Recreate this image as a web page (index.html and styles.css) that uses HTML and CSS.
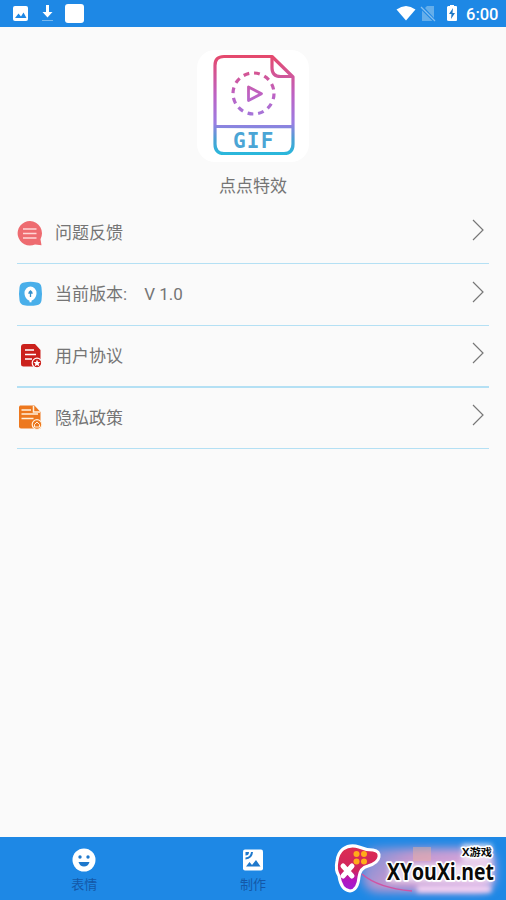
FILE: index.html
```html
<!DOCTYPE html>
<html lang="zh-CN">
<head>
<meta charset="utf-8">
<title>点点特效</title>
<link rel="stylesheet" href="styles.css">
</head>
<body>
<div class="screen">
  <header class="status">
    <svg class="status-left" width="100" height="27" viewBox="0 0 100 27">
      <rect x="13" y="6" width="15" height="15" rx="2" fill="#fff"/>
      <path d="M15 18l3.500-4.500 2.500 3 2.500-4 3 5.500z" fill="#1e88e5"/>
      <path d="M46 5h3v7h3.500L47.500 17.500 42.500 12H46z" fill="#fff"/>
      <path d="M42 20.500h11" stroke="#78b8ef"/>
      <rect x="65" y="4" width="19" height="19" rx="3" fill="#fff"/>
    </svg>
    <div class="status-right">
      <svg width="70" height="27" viewBox="0 0 70 27">
        <path d="M6.500 9.500Q16 2.500 25.500 9.500L16 20.500z" fill="#fff"/>
        <path d="M35 8l2-2h7v12zM32 10.500L42.500 21H32z" fill="#65aeea"/>
        <path d="M31 7l14 14" stroke="#86bfef" stroke-width="1.200"/>
        <path d="M58 6h2V5h4v1h2q1 0 1 1v13q0 1-1 1h-7q-2 0-2-1V7z" fill="#fff"/>
        <path d="M63 8l-4 6h2.500L61 19l4-6h-2.500z" fill="#1e78c5"/>
      </svg>
      <span class="clock">6:00</span>
    </div>
  </header>

  <main class="content">
    <div class="logo">
      <svg width="112" height="112" viewBox="0 0 112 112">
        <defs>
          <linearGradient id="ink" gradientUnits="userSpaceOnUse" x1="0" y1="5" x2="0" y2="105">
            <stop offset="0" stop-color="#e6496b"/>
            <stop offset=".4" stop-color="#bd62c4"/>
            <stop offset=".68" stop-color="#9b7de2"/>
            <stop offset=".84" stop-color="#4c9fd4"/>
            <stop offset="1" stop-color="#28b9dc"/>
          </linearGradient>
        </defs>
        <g fill="none" stroke="url(#ink)" stroke-width="3.200" stroke-linejoin="round">
          <path d="M27 6.500H75L96 27V94q0 9.500-9 9.500H27q-9 0-9-9.500V15.500q0-9 9-9z"/>
          <path d="M75 6.500V18q0 8.500 8.500 8.500h12"/>
          <path d="M18 76.500l77.500.200"/>
          <circle cx="56.500" cy="43.500" r="20.500" stroke-dasharray="5.800 4.930"/>
          <path d="M51.500 37v13.500l13-6.800z" stroke-width="2.800"/>
        </g>
        <text class="gif" x="36" y="98">GIF</text>
      </svg>
    </div>
    <h1 class="name">点点特效</h1>

    <ul class="list">
      <li class="row">
        <svg class="icon" width="28" height="28" viewBox="0 0 28 28">
          <path d="M14 2a12.300 12.300 0 1 0 5 23.500l6.500.700-1-6A12.300 12.300 0 0 0 14 2z" fill="#ee6b70"/>
          <path d="M7 10h13.500M7 14.500h13.500M7 19h13.500" stroke="#ffd6d6" stroke-width="1.400"/>
        </svg>
        <span class="label">问题反馈</span>
        <svg class="arrow" width="14" height="22" viewBox="0 0 14 22"><path d="M2 1l10 10L2 21"/></svg>
      </li>
      <li class="row">
        <svg class="icon" width="28" height="28" viewBox="0 0 28 28">
          <path d="M8 2.500q6.500-1.500 13 0 4 .500 4.500 5 1 6.500 0 13-.500 4-5 4.800-6 1-12.500 0-4-.800-4.500-5-1-6.500 0-13Q4 3 8 2.500z" fill="#49afea"/>
          <path d="M14.500 6.500a6 6.500 0 0 0-6 6.500c0 4 2.500 6.800 5 7.700v1.500h2v-1.500c2.500-.900 5-3.700 5-7.700a6 6.500 0 0 0-6-6.500z" fill="#fff"/>
          <path d="M14.500 17v-6M12.300 13.200h4.400M13 12.500l1.500-1.500 1.500 1.500" stroke="#348fc9" stroke-width="1.300" fill="none"/>
        </svg>
        <span class="label">当前版本:</span><span class="version">V 1.0</span>
        <svg class="arrow" width="14" height="22" viewBox="0 0 14 22"><path d="M2 1l10 10L2 21"/></svg>
      </li>
      <li class="row row-thick">
        <svg class="icon" width="28" height="28" viewBox="0 0 28 28">
          <path d="M8 2h11l5.500 6v15.500q0 1-1 1H7.500Q5 24.500 5 22V5q0-3 3-3z" fill="#cb211c"/>
          <path d="M9 8h9M9 12.500h11M9 17h7" stroke="#fff" stroke-width="1.600"/>
          <circle cx="21" cy="21" r="4.800" fill="#cb211c" stroke="#fff" stroke-width="1.200"/>
          <path d="M21 17.500l1 2.400 2.500.200-1.900 1.700.600 2.500-2.200-1.400-2.200 1.400.600-2.500-1.900-1.700 2.500-.200z" fill="#fff"/>
        </svg>
        <span class="label">用户协议</span>
        <svg class="arrow" width="14" height="22" viewBox="0 0 14 22"><path d="M2 1l10 10L2 21"/></svg>
      </li>
      <li class="row">
        <svg class="icon" width="28" height="28" viewBox="0 0 28 28">
          <path d="M4 1.500h14.500l6 6.500v16.500H5q-2 0-2-2v-20z" fill="#ed781e"/>
          <path d="M17.500 2v6H24M5.500 6H15M5.500 10H22M5.500 14.500h12" stroke="#fff0dc" stroke-width="1.500" fill="none"/>
          <circle cx="21" cy="20.500" r="4.800" fill="#ed781e" stroke="#fff0dc" stroke-width="1.200"/>
          <path d="M18.500 20.500l2.500-2.500 2.500 2.500v2.500h-5z" stroke="#fff0dc" fill="none"/>
        </svg>
        <span class="label">隐私政策</span>
        <svg class="arrow" width="14" height="22" viewBox="0 0 14 22"><path d="M2 1l10 10L2 21"/></svg>
      </li>
    </ul>
  </main>

  <nav class="tabs">
    <div class="tab">
      <svg width="24" height="24" viewBox="0 0 24 24">
        <circle cx="12" cy="12" r="11.500" fill="#fff"/>
        <circle cx="8" cy="9" r="1.700" fill="#1e78cc"/><circle cx="16" cy="9" r="1.700" fill="#1e78cc"/>
        <path d="M6.500 14h11q-1.500 4.500-5.500 4.500T6.500 14z" fill="#1e78cc"/>
      </svg>
      <span>表情</span>
    </div>
    <div class="tab">
      <svg width="24" height="24" viewBox="0 0 24 24">
        <rect x="2" y="1.500" width="20" height="21" rx="2" fill="#fff"/>
        <path d="M4.500 4H8q0 3.500-3.500 3.500zM10 4h2q-.500 7-7.500 7.500v-2Q9.500 9 10 4zM5 18.500l3.500-4.500 2.500 3 4-5 4.500 6.500z" fill="#1e78cc"/>
      </svg>
      <span>制作</span>
    </div>
    <div class="tab"></div>
    <div class="badge">
      <svg width="186" height="63" viewBox="0 0 186 63">
        <defs>
          <linearGradient id="haze" x1="0" x2="1" y1="0" y2=".3">
            <stop offset="0" stop-color="#698fdb"/><stop offset=".4" stop-color="#c398cf"/><stop offset="1" stop-color="#d8a9df"/>
          </linearGradient>
          <linearGradient id="pad" x1="0" x2="0" y1="0" y2="1">
            <stop offset="0" stop-color="#dd2e50"/><stop offset=".55" stop-color="#cf245f"/><stop offset=".75" stop-color="#b315bd"/><stop offset="1" stop-color="#9d20d7"/>
          </linearGradient>
          <filter id="soft" x="-20%" y="-40%" width="140%" height="180%"><feGaussianBlur stdDeviation="5"/></filter>
          <filter id="glow" filterUnits="userSpaceOnUse" x="60" y="0" width="126" height="63"><feGaussianBlur stdDeviation="2.500"/></filter>
        </defs>
        <rect x="42" y="11" width="133" height="44" rx="15" fill="url(#haze)" filter="url(#soft)"/>
        <path d="M93 10h18v14H93z" fill="#efb49b" opacity=".45"/>
        <path d="M97 52h74" stroke="#f7d3f2" stroke-width="7" filter="url(#glow)"/>
        <path d="M69 36h103M142 16h30" stroke="#fff" stroke-width="18" opacity=".65" filter="url(#glow)"/>
        <path d="M42 37Q58 51 92 54" fill="none" stroke="#cf54a4" stroke-width="1.600"/>
        <path d="M23 12Q30 7 39 10q7 3 14 3 7 1 6 7-1 6-11 9-8 2-9 11-1 13-9 14-9-1-11-15-4-6-2-15 1-8 6-12z" fill="url(#pad)" stroke="#fff" stroke-width="3"/>
        <g fill="#ffac19"><circle cx="36.500" cy="17" r="3"/><circle cx="44" cy="17" r="3"/><circle cx="36.500" cy="24.500" r="3"/><circle cx="44" cy="24.500" r="3"/></g>
        <path d="M23 29l9 10m0-10l-9 10" stroke="#fff" stroke-width="5" stroke-linecap="round"/>
        <text class="badge-small" x="142" y="19" textLength="30" lengthAdjust="spacingAndGlyphs">X游戏</text>
        <text class="badge-main" x="67" y="43" textLength="107" lengthAdjust="spacingAndGlyphs">XYouXi.net</text>
      </svg>
    </div>
  </nav>
</div>
</body>
</html>
```
FILE: styles.css
```css
* { box-sizing: border-box; }
body {
  margin: 0;
  background: #fafafa;
  color: #757575;
  font-family: Roboto, "Noto Sans CJK SC", sans-serif;
}
svg { display: block; flex: none; overflow: visible; }
.screen { width: 506px; height: 900px; display: flex; flex-direction: column; }
.status {
  height: 27px;
  flex: none;
  display: flex;
  justify-content: space-between;
  background: #1e88e5;
}
.status-right { display: flex; width: 116px; align-items: center; }
.clock { padding-left: 6px; padding-top: 1px; color: #fff; font-size: 16.5px; font-weight: 500; white-space: nowrap; }
.content { flex: 1; padding: 23px 17px 0; }
.logo { width: 112px; height: 112px; margin: 0 auto; background: #fff; border-radius: 18px; }
.gif { font: bold 21px "DejaVu Sans Mono", monospace; letter-spacing: 1.2px; fill: #4ba5d5; }
.name {
  margin: 12px 0 0;
  height: 24px;
  line-height: 24px;
  font-size: 17px;
  font-weight: 400;
  text-align: center;
}
.list { margin: 4px 0 0; padding: 0; list-style: none; }
.row {
  height: 61.75px;
  padding-right: 4px;
  display: flex;
  align-items: center;
  border-bottom: 1px solid #b4e0f4;
}
.row:first-child { height: 62px; }
.row-thick { border-bottom-width: 2px; }
.icon { margin-left: -1px; }
.label { margin-left: 11px; font-size: 17px; line-height: 24px; }
.version { margin-left: 17px; font-size: 17px; line-height: 24px; }
.arrow { margin-left: auto; margin-top: -5px; }
.arrow path { fill: none; stroke: #777; stroke-width: 1.2; }
.tabs { position: relative; height: 63px; flex: none; display: flex; background: #1e88e5; }
.tab {
  flex: 1;
  display: flex;
  flex-direction: column;
  align-items: center;
  padding-top: 11px;
  color: #1458a8;
  font-size: 13px;
  line-height: 18px;
}
.tab span { margin-top: 4px; }
.badge { position: absolute; right: 0; bottom: 0; }
.badge-small, .badge-main { fill: #090909; stroke: #fff; paint-order: stroke; stroke-linejoin: round; font-family: "Open Sans", "Noto Sans CJK SC", sans-serif; font-weight: 700; }
.badge-small { font-size: 10.5px; stroke-width: 3px; }
.badge-main { font-size: 24px; stroke-width: 3.5px; }
```
